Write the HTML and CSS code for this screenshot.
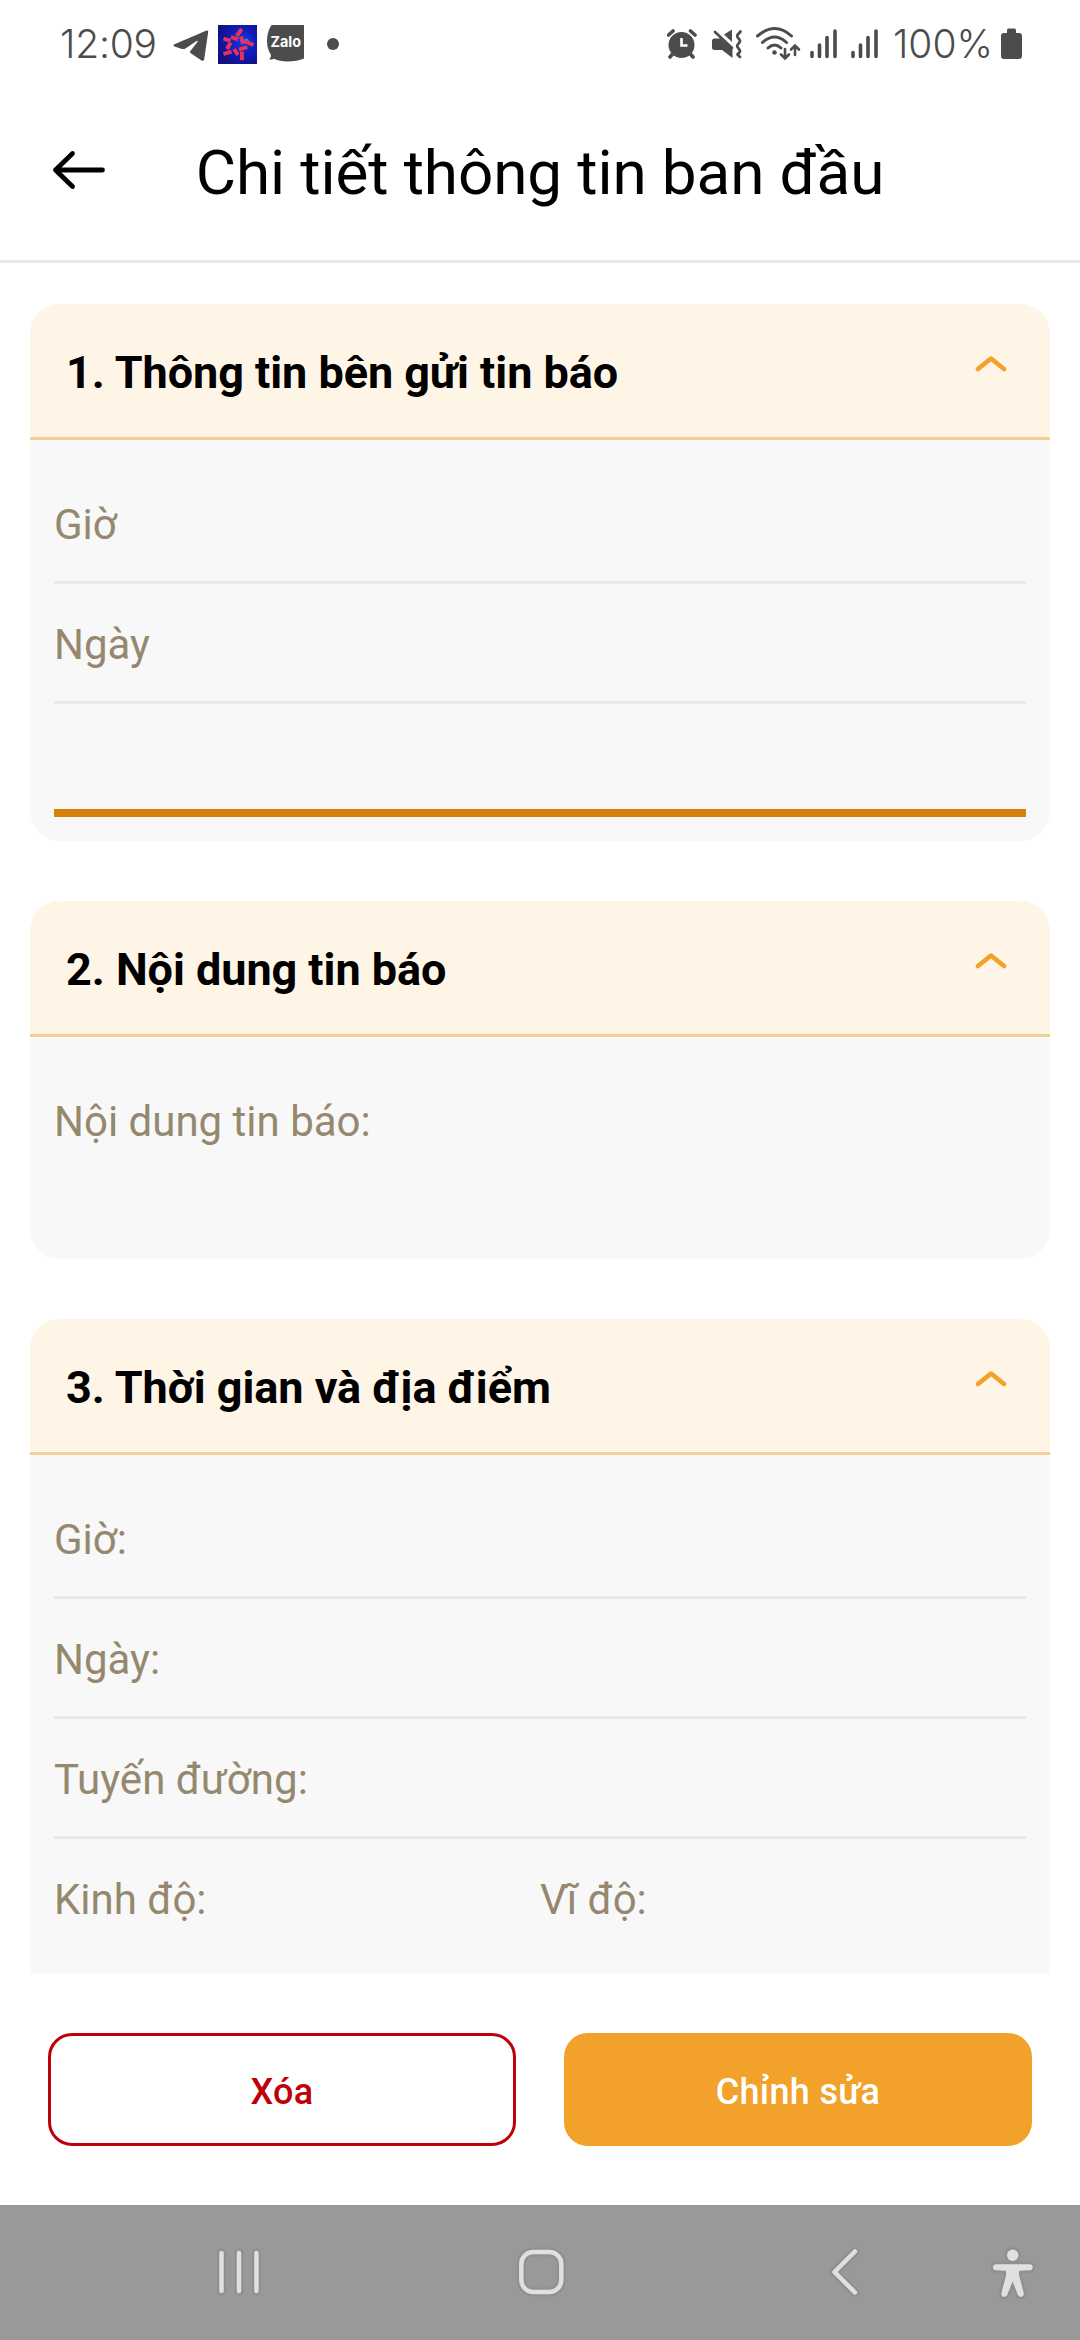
FILE: index.html
```html
<!DOCTYPE html>
<html lang="vi">
<head>
<meta charset="utf-8">
<title>Chi tiết thông tin ban đầu</title>
<link rel="stylesheet" href="styles.css">
</head>
<body>
<div class="screen">
  <div class="status">
    <span class="status-text clock">12:09</span>
    <svg class="telegram" width="36" height="90" viewBox="173 0 36 90"><path fill="#4c4c4c" d="M206.500 30.500q2-.5 1.700 1.500l-4 27.300q-.6 2.300-2.700 1.200l-10.700-7.300q-1.400-1.200-.2-2.500l7-9q.6-1.600-1-.7l-11.200 7.500q-1.600.9-3.400.4l-7.500-2.500q-2.300-1 0-2.200z"/></svg>
    <svg class="star" width="39" height="90" viewBox="218 0 39 90">
      <defs><radialGradient id="sky" cx=".62" cy=".42" r=".7"><stop offset="0" stop-color="#1638e0"/><stop offset=".55" stop-color="#1219b4"/><stop offset="1" stop-color="#10107c"/></radialGradient></defs>
      <rect x="218" y="25" width="39" height="39" fill="url(#sky)"/>
      <circle cx="246.500" cy="41" r="2.500" fill="#3d8df0" opacity=".8"/>
      <path stroke="#e83358" stroke-width="3.900" fill="none" d="M241.700 29l-5 7M223.500 38.500l7 2.500M231 37l7 2.300M230.700 42.500l-3.600 6.500M223.500 54l8-2.300M234 49l4 6M242 51.500v8.800M239 49.300l8.300-2.200M245.500 41.500l8 3.500M241 36.500l2 7.500"/>
    </svg>
    <svg class="zalo" width="38" height="90" viewBox="267 0 38 90"><path fill="#4c4c4c" d="M271.500 25h32.500v33.500q-7 3-16.500 3-8 0-13.500-2.700-1.800.9-4.700.4 2.200-1.500 1.600-4.700-3.900-5.500-3.900-13.500 0-9 4.500-16z"/><text x="270.500" y="47" textLength="30.500" lengthAdjust="spacingAndGlyphs" class="zalo-text">Zalo</text></svg>
    <i class="dot"></i>
    <div class="status-right">
      <svg width="30" height="90" viewBox="666 0 30 90"><circle cx="680.500" cy="45" r="13" fill="#4c4c4c"/><path d="M667.500 35l4.500-4M689.500 31l4.500 4M672 53.500l-3 3.500M689 53.500l3 3.500" stroke="#4c4c4c" stroke-width="3.600" stroke-linecap="round"/><path d="M680.500 38v7.500h6" stroke="#fff" stroke-width="2.600" fill="none"/></svg>
      <svg class="mute" width="31" height="90" viewBox="711 0 31 90"><path fill="#4c4c4c" d="M731 29.500v12.500l-8-7.500zM713.500 38.500h6l12 11v8.500l-10.500-8h-7.500q-2.500 0-2.500-2.500v-6.500q0-2.500 2.500-2.500z"/><path d="M714 32l17 16" stroke="#4c4c4c" stroke-width="2.600" stroke-linecap="round"/><path d="M739.500 31.500l-3 3.500q-.6 1 0 2l2.200 3q.6 1 0 2l-2.200 3q-.6 1 0 2l2.200 3q.6 1 0 2l-2.200 2.500 2.500 2.500" stroke="#4c4c4c" stroke-width="2.800" stroke-linecap="round" stroke-linejoin="round" fill="none"/></svg>
      <svg class="wifi" width="45" height="90" viewBox="755 0 45 90"><g stroke="#4c4c4c" fill="none" stroke-linecap="round"><path stroke-width="3" d="M756.500 36q17.500-15 34 0M761.500 42.500q12-11 24 0M767 48q6.500-6 13 0"/><path stroke-width="2.600" d="M784 49v9M780 54.500l4 4 4-4M794 55v-9M790 49.500l4-4 4 4"/></g><circle cx="773.500" cy="52.500" r="2.300" fill="#4c4c4c"/></svg>
      <svg class="signal" width="27" height="90" viewBox="809 0 27 90"><path d="M811 52.500v4M818.500 45v11.500M826 37.500v19M834 31v25.500" stroke="#4c4c4c" stroke-width="3.600" stroke-linecap="round"/></svg>
      <svg class="signal2" width="27" height="90" viewBox="809 0 27 90"><path d="M811 52.500v4M818.500 45v11.500M826 37.500v19M834 31v25.500" stroke="#4c4c4c" stroke-width="3.600" stroke-linecap="round"/></svg>
      <span class="status-text level">100%</span>
      <svg width="21" height="90" viewBox="1000 0 21 90"><path fill="#4c4c4c" d="M1006 33v-3q0-1.500 1.500-1.500h6q1.500 0 1.500 1.500v3h3q3 0 3 3v20q0 3-3 3h-15q-3 0-3-3v-20q0-3 3-3z"/></svg>
    </div>
  </div>

  <header class="topbar">
    <svg class="back" width="54" height="40" viewBox="52 150 54 40"><path d="M72.500 153.500l-17 16.500 17 16.500M55.500 170h47" fill="none" stroke="#000" stroke-width="4.800" stroke-linecap="round" stroke-linejoin="round"/></svg>
    <h1 class="title">Chi tiết thông tin ban đầu</h1>
  </header>

  <main class="content">
    <section class="card">
      <div class="card-head"><h2 class="card-title">1. Thông tin bên gửi tin báo</h2><svg class="chevron" width="32" height="18" viewBox="0 0 32 18"><path d="M3 14l13-10.500 13 10.500"/></svg></div>
      <div class="card-body">
        <div class="row"><span class="label">Giờ</span></div>
        <div class="row"><span class="label">Ngày</span></div>
        <div class="input-line"></div>
      </div>
    </section>
    <section class="card">
      <div class="card-head"><h2 class="card-title">2. Nội dung tin báo</h2><svg class="chevron" width="32" height="18" viewBox="0 0 32 18"><path d="M3 14l13-10.500 13 10.500"/></svg></div>
      <div class="card-body note">
        <div class="row plain"><span class="label">Nội dung tin báo:</span></div>
      </div>
    </section>
    <section class="card">
      <div class="card-head"><h2 class="card-title">3. Thời gian và địa điểm</h2><svg class="chevron" width="32" height="18" viewBox="0 0 32 18"><path d="M3 14l13-10.500 13 10.500"/></svg></div>
      <div class="card-body place">
        <div class="row"><span class="label">Giờ:</span></div>
        <div class="row"><span class="label">Ngày:</span></div>
        <div class="row"><span class="label">Tuyến đường:</span></div>
        <div class="row plain"><span class="label">Kinh độ:</span><span class="label">Vĩ độ:</span></div>
      </div>
    </section>
  </main>

  <footer class="actions">
    <button class="btn btn-delete">Xóa</button>
    <button class="btn btn-edit">Chỉnh sửa</button>
  </footer>

  <nav class="navbar">
    <svg class="recents" width="48" height="60" viewBox="215 2242 48 60"><path class="halo" d="M221.500 2253v38M239 2253v38M256.500 2253v38"/><path class="line" d="M221.500 2253v38M239 2253v38M256.500 2253v38"/></svg>
    <svg class="home" width="54" height="60" viewBox="514 2242 54 60"><rect class="halo" x="521.300" y="2252" width="40" height="40" rx="12"/><rect class="line" x="521.300" y="2252" width="40" height="40" rx="12"/></svg>
    <svg class="prev" width="36" height="60" viewBox="827 2242 36 60"><path class="halo" d="M855 2251.500l-20.500 20.500 20.500 20.500"/><path class="line" d="M855 2251.500l-20.500 20.500 20.500 20.500"/></svg>
    <svg class="access" width="44" height="60" viewBox="991 2242 44 60">
      <defs><g id="person"><circle cx="1012.700" cy="2255.300" r="5.700"/><path d="M996.500 2264.200h33q3.200 0 3.200 3t-3 3l-10.400.6q-.6 3 .2 6l4.300 16.500q.4 3-2.200 3.500t-3.700-2l-5.300-13.300-5.300 13.300q-1.200 2.600-3.700 2t-2.200-3.500l4.300-16.500q.8-3 .2-6l-10-.6q-3-.1-3-3t3.600-3z"/></g></defs>
      <use href="#person" fill="#909090" stroke="#909090" stroke-width="5"/><use href="#person" fill="#e0e0e0"/>
    </svg>
  </nav>
</div>
</body>
</html>
```
FILE: styles.css
```css
* { box-sizing: border-box; }
body { margin: 0; background: #fff; font-family: Roboto, sans-serif; color: #000; }
svg { display: block; flex: none; }
.screen { width: 1080px; height: 2340px; display: flex; flex-direction: column; overflow: hidden; background: #fff; }

.status { height: 90px; flex: none; display: flex; align-items: center; padding: 0 58px 0 60px; }
.status-text { font-family: Inter, sans-serif; font-weight: 350; font-size: 39px; line-height: 88px; height: 90px; color: #4c4c4c; white-space: nowrap; }
.clock { width: 113px; letter-spacing: -0.2px; }
.star { margin-left: 9px; }
.zalo { margin-left: 10px; }
.zalo-text { font: 700 15px Inter, sans-serif; fill: #fff; }
.dot { width: 12px; height: 12px; border-radius: 50%; background: #4c4c4c; margin: -2px 0 0 22px; }
.status-right { display: flex; margin-left: auto; }
.mute { margin-left: 15px; }
.wifi { margin-left: 13px; }
.signal { margin-left: 9px; }
.signal2 { margin-left: 14px; }
.level { width: 108px; margin-left: 15px; letter-spacing: 0; }

.topbar { height: 173px; flex: none; display: grid; grid-template-columns: 130px 1fr 130px; border-bottom: 3px solid #e8e8e8; }
.back { margin: 60px 0 0 52px; }
.title { margin: 46px 0 0; text-align: center; font-size: 62px; line-height: 73px; letter-spacing: -0.1px; font-weight: 400; white-space: nowrap; }

.content { flex: 1; min-height: 0; overflow: hidden; display: flex; flex-direction: column; gap: 60px; padding: 41px 30px 0; }
.card { flex: none; border-radius: 30px; overflow: hidden; background: #f8f8f8; }
.card-head { height: 136px; display: flex; justify-content: space-between; padding: 0 43px 0 36px; background: #fff5e6; border-bottom: 3px solid #f3cf98; }
.card-title { margin: 0; font-size: 45px; line-height: 137px; letter-spacing: -0.05px; font-weight: 700; }
.chevron { margin-top: 51px; fill: none; stroke: #f2a12a; stroke-width: 4.6px; stroke-linecap: round; stroke-linejoin: round; }
.card-body { padding: 24px; }
.note { height: 222px; }
.place { height: 648px; }
.row { height: 120px; display: flex; border-bottom: 3px solid #e8e8e8; }
.plain { border-bottom-color: transparent; }
.label { flex: 1; font-size: 42px; line-height: 121px; height: 117px; color: #95886f; }
.input-line { height: 113px; border-bottom: 8px solid #d48209; }

.actions { height: 231px; flex: none; display: grid; grid-template-columns: 1fr 1fr; gap: 48px; padding: 59px 48px; }
.btn { height: 113px; border-radius: 24px; padding: 4px 0 0; font: 500 36px Roboto, sans-serif; letter-spacing: 0.3px; }
.btn-delete { border: 3px solid #c00008; background: #fff; color: #c00008; }
.btn-edit { border: 0; background: #f2a12a; color: #fff; }

.navbar { height: 135px; flex: none; display: flex; padding: 37px 45px 0 215px; background: #999; }
.halo, .line { fill: none; stroke-linecap: round; stroke-linejoin: round; }
.halo { stroke: #909090; stroke-width: 9px; }
.line { stroke: #e0e0e0; stroke-width: 4.5px; }
.home { margin-left: 251px; }
.prev { margin-left: 259px; }
.access { margin-left: auto; }
```
